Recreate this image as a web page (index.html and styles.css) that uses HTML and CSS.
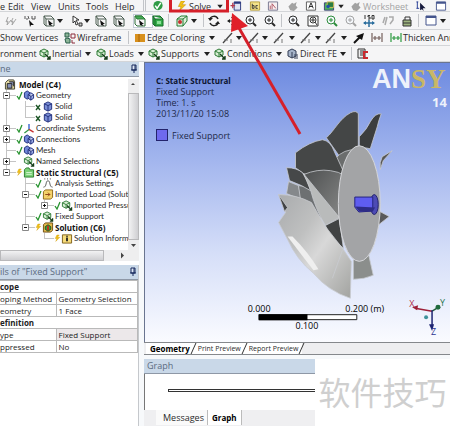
FILE: index.html
```html
<!DOCTYPE html>
<html lang="en">
<head>
    <meta charset="UTF-8">
    <meta name="viewport" content="width=device-width, initial-scale=1.0">
    <title>Mechanical</title>
    <link rel="stylesheet" href="styles.css">
</head>
<body>
    <svg class="defs" aria-hidden="true">
        <symbol id="cube" viewBox="0 0 12 12"><path d="M2 3l4-2 4 2v6l-4 2-4-2z" fill="#7b8fd6" stroke="#1c2a78"/><path d="M2 3l4 2 4-2M6 5v6" fill="none" stroke="#1c2a78"/></symbol>
        <symbol id="cubes" viewBox="0 0 12 12"><path d="M1 3l3-2 3 2v5l-3 2-3-2z" fill="#6f87d8" stroke="#1c2a78"/><path d="M5 5l3-2 3 2v4l-3 2-3-2zM5 5l3 2 3-2M8 7v4" fill="#9aaae4" stroke="#1c2a78"/></symbol>
        <symbol id="gcube" viewBox="0 0 12 12"><path d="M1 3l4-2 4 2v4l-4 2-4-2z" fill="#d8efd4" stroke="#2c7a34"/><path d="M1 3l4 2 4-2M5 5v4" fill="none" stroke="#2c7a34"/><path d="M6 6l5 5M11 8v3H8" fill="none" stroke="#143c18" stroke-width="1.4"/></symbol>
        <symbol id="axes" viewBox="0 0 12 12"><path d="M6 1v6" stroke="#2653c8" stroke-width="1.4"/><path d="M6 7l-5 4" stroke="#2f9440" stroke-width="1.4"/><path d="M6 7l5 3" stroke="#c63030" stroke-width="1.4"/></symbol>
        <symbol id="model" viewBox="0 0 12 12"><path d="M1 4l3-3h6l1 2v8H1z" fill="#e5dba4" stroke="#3b3b2c"/><path d="M3 5h5v5H3zM5 3h5v5" fill="#8a94b8" stroke="#222"/></symbol>
        <symbol id="folder" viewBox="0 0 12 12"><path d="M1 3l2-2h3l1 2h4v8H1z" fill="#7bd077" stroke="#287c2b"/><path d="M3 6h6M3 8h6" stroke="#d6f5d2"/></symbol>
        <symbol id="import" viewBox="0 0 12 12"><path d="M1 3l2-2h8v8l-2 2H1z" fill="#f4d26a" stroke="#8a6412"/><path d="M3 6h5M6 4l2 2-2 2" fill="none" stroke="#8a3c10"/></symbol>
        <symbol id="solution" viewBox="0 0 12 12"><path d="M1 3l2-2h8v8l-2 2H1z" fill="#e2b84c" stroke="#6b4a10"/><path d="M3 5l3-2 3 2v3l-3 2-3-2z" fill="#3fa23c" stroke="#1c541d"/><path d="M6 4v5" stroke="#c82f20" stroke-width="2"/></symbol>
        <symbol id="info" viewBox="0 0 12 12"><path d="M1 2h10v9H1z" fill="#f7dc7a" stroke="#7b5d18"/><path d="M6 3v1M6 5v4" stroke="#222" stroke-width="2"/></symbol>
        <symbol id="settings" viewBox="0 0 12 12"><path d="M1 10c4 0 2-7 5-7s1 7 5 7" fill="none" stroke="#555"/><path d="M2 1h1M5 1h1M8 1h1" stroke="#222"/></symbol>
        <symbol id="tick" viewBox="0 0 7 9"><path d="M1 5l2 3 3-7" fill="none" stroke="#27932f" stroke-width="1.3"/></symbol>
        <symbol id="cross" viewBox="0 0 7 9"><path d="M1 3l4 5M5 3L1 8" fill="none" stroke="#1d5527" stroke-width="1.4"/></symbol>
        <symbol id="bolt" viewBox="0 0 12 12"><path d="M5 0L2 6h3l-2 5 7-7H6l3-4z" fill="#f3c313" stroke="#c79006" stroke-width=".6"/></symbol>
        <symbol id="plus" viewBox="0 0 7 7"><path d="M.5.5h6v6h-6z" fill="#fff" stroke="#888"/><path d="M2 3.500h3M3.500 2v3" stroke="#111"/></symbol>
        <symbol id="minus" viewBox="0 0 7 7"><path d="M.5.5h6v6h-6z" fill="#fff" stroke="#888"/><path d="M2 3.500h3" stroke="#111"/></symbol>
        <symbol id="caret" viewBox="0 0 9 12"><path d="M1 4h6L4 8z" fill="#222"/></symbol>
        <symbol id="pin" viewBox="0 0 8 10"><path d="M2 1h4v5H2zM1 6h6M4 6v3" fill="#dfe8f6" stroke="#17285c"/><path d="M5 1v5" stroke="#17285c"/></symbol>
        <symbol id="ok" viewBox="0 0 12 12"><circle cx="6" cy="5" r="5" fill="#2f9b45"/><path d="M3 5l2 3 4-6" fill="none" stroke="#fff" stroke-width="1.600"/></symbol>
        <symbol id="pageplus" viewBox="0 0 12 12"><path d="M4 1h7v9H4z" fill="#dfe4f2" stroke="#26357c"/><path d="M4 1h7v2H4z" fill="#26357c"/><path d="M0 5h5M2.500 2v6" stroke="#b5374c" stroke-width="1.400"/></symbol>
        <symbol id="note" viewBox="0 0 12 12"><path d="M1 1h10v9H1z" fill="#f3e38a" stroke="#b59b3a"/><path d="M3 3v5h2V5H3M7 5h2M7 5v3h2" fill="none" stroke="#333"/></symbol>
        <symbol id="chart" viewBox="0 0 12 12"><path d="M1 1h10v9H1z" fill="#f6eef0" stroke="#74748c"/><path d="M3 9V5M5 9V3l4 5" fill="none" stroke="#b05360"/></symbol>
        <symbol id="blob" viewBox="0 0 12 12"><path d="M1 6l4-4 2 1 3-2-1 4 2 2-4 4-4-1z" fill="#a2a2a2"/></symbol>
        <symbol id="boxa" viewBox="0 0 12 12"><path d="M1 1h10v9H1z" fill="#fff" stroke="#555"/><path d="M3.500 8L6 2l2.500 6M4 6h4" fill="none" stroke="#222"/></symbol>
        <symbol id="photo" viewBox="0 0 12 12"><path d="M1 2h10v8H1z" fill="#4ab05c" stroke="#3a3d75"/><path d="M4 1h7v6H4z" fill="#2b7d42" stroke="#d9c15a"/><circle cx="5" cy="6" r="2" fill="#214fae"/></symbol>
        <symbol id="icursor" viewBox="0 0 12 12"><path d="M2 1v7M1 1h2M1 8h3" stroke="#1d3592"/><path d="M5 2l6 6H8l1 3-2-2-2 1z" fill="#161a3c"/></symbol>
        <symbol id="greybolt" viewBox="0 0 12 12"><path d="M3 2L1 7l2-1-1 4 4-5M8 3L6 7l2-1-1 4 4-6" fill="none" stroke="#a5a5a5"/></symbol>
        <symbol id="dots" viewBox="0 0 12 12"><path d="M1 1v3M4 1l1 3M8 1v3M11 1v3M2 4h2M8 4h3" stroke="#555"/><path d="M5 5l5 5H7l-1 2z" fill="#111"/></symbol>
        <symbol id="selbox" viewBox="0 0 12 12"><path d="M1 1h7l3 3v7H3L1 9zM1 1l2 3h8M3 4v7" fill="#f7f7f7" stroke="#4a5c50"/><path d="M5 5l5 4H8l1 2-3-1z" fill="#111"/></symbol>
        <symbol id="selgreen" viewBox="0 0 12 12"><path d="M1 1h7l3 3v7H3L1 9z" fill="#f7f7f7" stroke="#2a6d36"/><path d="M1 1h7l3 3H3z" fill="#45ab55" stroke="#2a7c36"/><path d="M5 5l5 4H8l1 2-3-1z" fill="#111"/></symbol>
        <symbol id="fullgreen" viewBox="0 0 12 12"><path d="M1 1h7l3 3v7H3L1 9zM1 1l2 3h8M3 4v7" fill="#35ae4b" stroke="#146b26"/><path d="M5 6h4v3H5z" fill="#8be097"/></symbol>
        <symbol id="pick" viewBox="0 0 12 12"><path d="M2 1v7l2-2 1 4 2-1-2-4h3z" fill="#fff" stroke="#333"/><path d="M8 8h3v3H8z" fill="#ccc" stroke="#333"/></symbol>
        <symbol id="view" viewBox="0 0 12 12"><path d="M1 4l4-3h6v5l-4 5H1z" fill="#dff0dc" stroke="#247c33"/><path d="M1 4h6v7M7 4l4-3" fill="none" stroke="#247c33"/><circle cx="4" cy="7" r="2" fill="#c83030"/></symbol>
        <symbol id="rotate" viewBox="0 0 12 12"><path d="M10 4C8 0 3 1 2 4M2 8c2 4 7 3 8 0" fill="none" stroke="#222" stroke-width="1.500"/><path d="M0 3h5L2 6zM12 9H7l3-3z" fill="#222"/></symbol>
        <symbol id="move" viewBox="0 0 12 12"><path d="M6 1v10M1 6h10" stroke="#222"/><path d="M6 0l2 3H4zM6 12l2-3H4zM0 6l3-2v4zM12 6L9 4v4z" fill="#222"/></symbol>
        <symbol id="lens" viewBox="0 0 12 12"><circle cx="5" cy="5" r="4" fill="#f4f7fb" stroke="currentColor"/><path d="M8 8l3 3" stroke="currentColor" stroke-width="2"/><path d="M3 5h4M5 3v4" stroke="currentColor"/></symbol>
        <symbol id="boxlens" viewBox="0 0 12 12"><path d="M1 1h10v10H1z" fill="#fff" stroke="#333"/><circle cx="6" cy="5" r="3" fill="none" stroke="#333"/><path d="M8 7l2 3M4 5h4M6 3v4" stroke="#333"/></symbol>
        <symbol id="iso" viewBox="0 0 12 12"><path d="M2 0v4M7 .5H5v1.500h2V4H5M9 .5h2V4H9z" fill="none" stroke="#333"/><path d="M1 8h10M6 5v7" stroke="#2b6d9d" stroke-width="1.500"/><path d="M0 8l3-2v4zM12 8L9 6v4z" fill="#2b6d9d"/></symbol>
        <symbol id="look" viewBox="0 0 12 12"><path d="M3 2L1 8M5 2L3 10M7 2h4v3L8 9" fill="none" stroke="#aaa" stroke-width="1.500"/></symbol>
        <symbol id="stack" viewBox="0 0 12 12"><path d="M2 5h8v6H2z" fill="#9db47f" stroke="#333"/><path d="M4 5V2h5v3M2 8h8" fill="none" stroke="#333"/></symbol>
        <symbol id="window" viewBox="0 0 12 12"><path d="M1 1h10v9H1z" fill="#fff" stroke="#44548c"/><path d="M1 2h10" stroke="#44548c" stroke-width="2"/></symbol>
        <symbol id="wire" viewBox="0 0 12 12"><path d="M1 1h4v4H1zM1 7l2-1 3 1v4H2z" fill="#8db698" stroke="#2a5f4a"/><path d="M7 2h4v4H7zM8 8v3h3" fill="none" stroke="#8c2d3a"/></symbol>
        <symbol id="swatch" viewBox="0 0 12 12"><path d="M1 2h10v8H1z" fill="#d8901c"/><path d="M5 2v8" stroke="#a86508"/></symbol>
        <symbol id="edge" viewBox="0 0 12 12"><path d="M1 11l9-10" stroke="#444" stroke-width="1.300"/><path d="M2 8h4M9 7v4" stroke="#777"/></symbol>
        <symbol id="arrow" viewBox="0 0 12 12"><path d="M1 11l6-6" stroke="#111" stroke-width="2"/><path d="M11 1L9 8 3 4z" fill="#111"/></symbol>
        <symbol id="span" viewBox="0 0 12 12"><path d="M1 1v9M11 1v9M2 6h8M4 4v4M8 4v4" fill="none" stroke="currentColor" stroke-width="1.200"/></symbol>
        <symbol id="report" viewBox="0 0 12 12"><path d="M1 1h7v9H1zM3 3h4M3 5h4M3 7h4" fill="#eee" stroke="#333"/><path d="M11 4H7v6h4" fill="none" stroke="#c9282d" stroke-width="2"/></symbol>
        <symbol id="direct" viewBox="0 0 12 12"><path d="M1 3l4-2 4 2v5l-4 2-4-2z" fill="#a5b3c9" stroke="#333c55"/><path d="M5 4v6M8 6v5M10 6v5" stroke="#333c55"/></symbol>
    </svg>

    <header class="toolbars">
        <nav class="bar bar-menu">
            <button>e</button>
            <button>Edit</button>
            <button>View</button>
            <button>Units</button>
            <button>Tools</button>
            <button>Help</button>
            <i class="sep double"></i>
            <button aria-label="Check"><svg><use href="#ok"/></svg></button>
            <button><svg><use href="#bolt"/></svg>Solve</button>
            <button class="drop" aria-label="Solve options"><svg><use href="#caret"/></svg></button>
            <button aria-label="New section"><svg><use href="#pageplus"/></svg></button>
            <button aria-label="Comment"><svg><use href="#note"/></svg></button>
            <button aria-label="Chart"><svg><use href="#chart"/></svg></button>
            <button aria-label="Tag"><svg><use href="#blob"/></svg></button>
            <button aria-label="Annotation"><svg><use href="#boxa"/></svg></button>
            <button aria-label="Image"><svg><use href="#photo"/></svg></button>
            <button class="drop" aria-label="Image options"><svg><use href="#caret"/></svg></button>
            <button class="off"><svg><use href="#blob"/></svg>Worksheet</button>
            <button aria-label="Selection info"><svg><use href="#icursor"/></svg></button>
            <button aria-label="Legend"><svg><use href="#window"/></svg></button>
        </nav>
        <div class="bar bar-select">
            <button aria-label="Label"><svg><use href="#greybolt"/></svg></button>
            <button aria-label="Coordinates"><svg><use href="#dots"/></svg></button>
            <button aria-label="Select type"><svg><use href="#selbox"/></svg></button>
            <button class="drop" aria-label="Type options"><svg><use href="#caret"/></svg></button>
            <button aria-label="Select mode"><svg><use href="#pick"/></svg></button>
            <button class="drop" aria-label="Mode options"><svg><use href="#caret"/></svg></button>
            <button aria-label="Vertex"><svg><use href="#selbox"/></svg></button>
            <button aria-label="Edge"><svg><use href="#selbox"/></svg></button>
            <button class="pressed" aria-label="Face"><svg><use href="#selgreen"/></svg></button>
            <button aria-label="Body"><svg><use href="#fullgreen"/></svg></button>
            <i class="sep"></i>
            <button aria-label="Extend"><svg><use href="#view"/></svg></button>
            <button class="drop" aria-label="Extend options"><svg><use href="#caret"/></svg></button>
            <i class="sep"></i>
            <button aria-label="Rotate"><svg><use href="#rotate"/></svg></button>
            <button aria-label="Pan"><svg><use href="#move"/></svg></button>
            <button aria-label="Zoom"><svg><use href="#lens"/></svg></button>
            <button aria-label="Box zoom"><svg><use href="#lens"/></svg></button>
            <i class="sep"></i>
            <button aria-label="Fit"><svg><use href="#lens"/></svg></button>
            <button aria-label="Magnifier"><svg><use href="#boxlens"/></svg></button>
            <button class="green" aria-label="Previous view"><svg><use href="#lens"/></svg></button>
            <button class="off" aria-label="Next view"><svg><use href="#lens"/></svg></button>
            <button aria-label="Iso view"><svg><use href="#iso"/></svg></button>
            <button aria-label="Look at"><svg><use href="#look"/></svg></button>
            <button aria-label="Manage views"><svg><use href="#stack"/></svg></button>
            <i class="sep"></i>
            <button aria-label="Viewports"><svg><use href="#window"/></svg></button>
            <button class="drop" aria-label="Viewport options"><svg><use href="#caret"/></svg></button>
        </div>
        <div class="bar bar-edges">
            <button>Show Vertices</button>
            <button><svg><use href="#wire"/></svg>Wireframe</button>
            <i class="sep"></i>
            <button><svg><use href="#swatch"/></svg>Edge Coloring</button>
            <button class="drop" aria-label="Coloring options"><svg><use href="#caret"/></svg></button>
            <button aria-label="Free edges"><svg><use href="#edge"/></svg></button>
            <button class="drop" aria-label="Free options"><svg><use href="#caret"/></svg></button>
            <button aria-label="Single edges"><svg><use href="#edge"/></svg></button>
            <button class="drop" aria-label="Single options"><svg><use href="#caret"/></svg></button>
            <button aria-label="Double edges"><svg><use href="#edge"/></svg></button>
            <button class="drop" aria-label="Double options"><svg><use href="#caret"/></svg></button>
            <button aria-label="Triple edges"><svg><use href="#edge"/></svg></button>
            <button class="drop" aria-label="Triple options"><svg><use href="#caret"/></svg></button>
            <button aria-label="Multiple edges"><svg><use href="#edge"/></svg></button>
            <button class="drop" aria-label="Multiple options"><svg><use href="#caret"/></svg></button>
            <button aria-label="Edge direction"><svg><use href="#arrow"/></svg></button>
            <button class="brown" aria-label="Mesh connection"><svg><use href="#span"/></svg></button>
            <button class="thicken"><svg><use href="#span"/></svg><span>Thicken Ann</span></button>
        </div>
        <div class="bar bar-env">
            <button>ronment</button>
            <button><svg><use href="#gcube"/></svg>Inertial</button>
            <button class="drop" aria-label="Inertial options"><svg><use href="#caret"/></svg></button>
            <button><svg><use href="#gcube"/></svg>Loads</button>
            <button class="drop" aria-label="Load options"><svg><use href="#caret"/></svg></button>
            <button><svg><use href="#gcube"/></svg>Supports</button>
            <button class="drop" aria-label="Support options"><svg><use href="#caret"/></svg></button>
            <button><svg><use href="#gcube"/></svg>Conditions</button>
            <button class="drop" aria-label="Condition options"><svg><use href="#caret"/></svg></button>
            <button><svg><use href="#direct"/></svg>Direct FE</button>
            <button class="drop" aria-label="Direct FE options"><svg><use href="#caret"/></svg></button>
            <i class="sep"></i>
            <button aria-label="Commands"><svg><use href="#report"/></svg></button>
        </div>
    </header>

    <main class="workspace">
        <aside class="side">
            <section class="outline">
                <h2 class="panel-title">ne <svg class="pin"><use href="#pin"/></svg></h2>
                <div class="tree-box">
                    <div class="tree">
                        <div class="row root"><svg class="icon"><use href="#model"/></svg><b>Model (C4)</b></div>
                        <ul>
                            <li>
                                <div class="row"><button class="slot" aria-label="Collapse"><svg><use href="#minus"/></svg></button><svg class="state"><use href="#tick"/></svg><svg class="icon"><use href="#cubes"/></svg>Geometry</div>
                                <ul>
                                    <li><div class="row"><i class="slot"></i><svg class="state"><use href="#cross"/></svg><svg class="icon"><use href="#cube"/></svg>Solid</div></li>
                                    <li><div class="row"><i class="slot"></i><svg class="state"><use href="#cross"/></svg><svg class="icon"><use href="#cube"/></svg>Solid</div></li>
                                </ul>
                            </li>
                            <li><div class="row"><button class="slot" aria-label="Expand"><svg><use href="#plus"/></svg></button><svg class="state"><use href="#tick"/></svg><svg class="icon"><use href="#axes"/></svg>Coordinate Systems</div></li>
                            <li><div class="row"><button class="slot" aria-label="Expand"><svg><use href="#plus"/></svg></button><svg class="state"><use href="#tick"/></svg><svg class="icon"><use href="#cubes"/></svg>Connections</div></li>
                            <li><div class="row"><i class="slot"></i><svg class="state"><use href="#tick"/></svg><svg class="icon"><use href="#cubes"/></svg>Mesh</div></li>
                            <li><div class="row"><button class="slot" aria-label="Expand"><svg><use href="#plus"/></svg></button><i class="state"></i><svg class="icon"><use href="#gcube"/></svg>Named Selections</div></li>
                            <li>
                                <div class="row"><button class="slot" aria-label="Collapse"><svg><use href="#minus"/></svg></button><svg class="state"><use href="#bolt"/></svg><svg class="icon"><use href="#folder"/></svg><b>Static Structural (C5)</b></div>
                                <ul>
                                    <li><div class="row"><i class="slot"></i><svg class="state"><use href="#tick"/></svg><svg class="icon"><use href="#settings"/></svg>Analysis Settings</div></li>
                                    <li>
                                        <div class="row"><button class="slot" aria-label="Collapse"><svg><use href="#minus"/></svg></button><svg class="state"><use href="#tick"/></svg><svg class="icon"><use href="#import"/></svg>Imported Load (Soluti</div>
                                        <ul>
                                            <li><div class="row"><button class="slot" aria-label="Expand"><svg><use href="#plus"/></svg></button><svg class="state"><use href="#tick"/></svg><svg class="icon"><use href="#gcube"/></svg>Imported Pressu</div></li>
                                        </ul>
                                    </li>
                                    <li><div class="row"><i class="slot"></i><svg class="state"><use href="#tick"/></svg><svg class="icon"><use href="#gcube"/></svg>Fixed Support</div></li>
                                    <li>
                                        <div class="row"><button class="slot" aria-label="Collapse"><svg><use href="#minus"/></svg></button><svg class="state"><use href="#bolt"/></svg><svg class="icon"><use href="#solution"/></svg><b>Solution (C6)</b></div>
                                        <ul>
                                            <li><div class="row"><i class="slot"></i><svg class="state"><use href="#bolt"/></svg><svg class="icon"><use href="#info"/></svg>Solution Informa</div></li>
                                        </ul>
                                    </li>
                                </ul>
                            </li>
                        </ul>
                    </div>
                    <div class="vscroll">
                        <svg viewBox="0 0 11 10"><path d="M3 6l2-2 2 2z" fill="#444"/></svg>
                        <span class="thumb"></span>
                        <svg viewBox="0 0 11 10"><path d="M3 4h5L5.500 7z" fill="#444"/></svg>
                    </div>
                </div>
                <div class="hscroll">
                    <span class="thumb"></span>
                    <svg viewBox="0 0 10 10"><path d="M4 2l3 3-3 3z" fill="#444"/></svg>
                </div>
            </section>

            <section class="details">
                <h2 class="panel-title">ils of "Fixed Support" <svg class="pin"><use href="#pin"/></svg></h2>
                <table>
                    <colgroup><col class="name"><col></colgroup>
                    <tr><th colspan="2">cope</th></tr>
                    <tr><td>oping Method</td><td>Geometry Selection</td></tr>
                    <tr><td>eometry</td><td>1 Face</td></tr>
                    <tr><th colspan="2">efinition</th></tr>
                    <tr><td>ype</td><td class="locked">Fixed Support</td></tr>
                    <tr><td>ppressed</td><td>No</td></tr>
                </table>
            </section>
        </aside>

        <div class="content">
            <section class="viewer">
                <svg class="scene" viewBox="144 62 306 280" preserveAspectRatio="xMinYMin slice">
                    <defs>
                        <linearGradient id="pale" x1="0" y1="0" x2="1" y2="1">
                            <stop offset="0" stop-color="#a9abad"/>
                            <stop offset=".35" stop-color="#bfc0c0"/>
                            <stop offset=".55" stop-color="#d8d8d8"/>
                            <stop offset="1" stop-color="#a2a3a0"/>
                        </linearGradient>
                        <linearGradient id="mid" x1="0" y1="0" x2="1" y2="1">
                            <stop offset="0" stop-color="#4d4f50"/>
                            <stop offset="1" stop-color="#8b8c8b"/>
                        </linearGradient>
                    </defs>
                    <g stroke="#c9cbd0" stroke-width=".8" stroke-linejoin="round">
                        <!-- upper blades -->
                        <path d="M326 137C334 130 339 118 350 112q6-3 8 1v36l-15 12z" fill="#444646"/>
                        <path d="M359 136q8-8 11-15 5-9 11-8-3 8-4 13l-7 22-11-2z" fill="#3c3e3f"/>
                        <path d="M335 158q8-10 22-9l-8 22-4 5z" fill="#6b6d6d"/>
                        <path d="M380 162l2-6 10-6-9 10-3 9z" fill="#555"/>
                        <path d="M295 152q14-11 27-13 8 1 12 12l11 24v12l-42-14-8-6z" fill="#454747"/>
                        <!-- middle blades -->
                        <path d="M303 174q14-6 27-4 9 1 14 5l-4 45-16 2z" fill="url(#mid)"/>
                        <path d="M288 181l10 4 3 14-15-6z" fill="#85888b"/>
                        <path d="M298 185l14 2 10 32-22-20z" fill="#6d7072"/>
                        <path d="M286 167q10 0 16 5 5 6 8 18l-9-5-12-5z" fill="#464849"/>
                        <path d="M303 173l36 44-14 8q-10-16-15-36z" fill="#b9bbbb"/>
                        <path d="M325 225l14-7 4 30-14-14z" fill="#414343"/>
                        <path d="M376 209l13 7-14 11z" fill="#59595b"/>
                        <path d="M353 260l14-12 6 27q-9 4-20 4z" fill="#8b8e8c"/>
                        <!-- lower shell -->
                        <path d="M278 194q18 0 33 8l14 24 18 23 8 12-1 37q-22-7-37-25-17-14-26-34l-9-17 7-10z" fill="url(#pale)"/>
                        <path d="M278 194l9 13-3 4z" fill="#404244"/>
                        <path d="M287 236q13 17 26 34l5-1q-10-17-26-33z" fill="#efefef" stroke="none"/>
                        <path d="M342 250l-10 28" fill="none"/>
                    </g>
                    <ellipse cx="359" cy="203" rx="21" ry="58" fill="#a3a4a6" stroke="#d4d5d8"/>
                    <ellipse cx="374" cy="204" rx="4" ry="10" fill="#4d4bb5" stroke="#25246e"/>
                    <path d="M354.500 196.500h18v14l-14 1-4-5z" fill="#5f5df0" stroke="#26247e"/>
                    <path d="M355 206l4 5h13l3-4z" fill="#2e2c86"/>
                    <!-- scale -->
                    <path d="M258.500 314.500h98v5h-98z" fill="#fff" stroke="#222"/>
                    <path d="M258 314h49v6h-49z" fill="#000"/>
                    <g class="scale">
                        <text x="247" y="312">0.000</text>
                        <text x="345" y="312">0.200 (m)</text>
                        <text x="295" y="329">0.100</text>
                    </g>
                    <!-- triad -->
                    <path d="M432 311l-17-3" stroke="#9d2038" stroke-width="1.500"/>
                    <path d="M412 307l6-2-1 5z" fill="#9d2038"/>
                    <path d="M432 311l5-3" stroke="#245c3c" stroke-width="1.500"/>
                    <circle cx="438" cy="307" r="2.500" fill="#1f6a3c"/>
                    <path d="M432 310v15" stroke="#1e2572" stroke-width="1.500"/>
                    <path d="M429 324h5l-2 7z" fill="#1e2572"/>
                    <circle cx="426" cy="317" r="2" fill="#3f929b"/>
                    <g class="scale">
                        <text x="409" y="307" fill="#b0304c">X</text>
                        <text x="440" y="306" fill="#2c7550">Y</text>
                        <text x="431" y="335" fill="#2c3690">Z</text>
                    </g>
                </svg>
                <div class="caption">
                    <b>C: Static Structural</b>
                    <span>Fixed Support</span>
                    <span>Time: 1. s</span>
                    <span>2013/11/20 15:08</span>
                    <span class="key"><i></i>Fixed Support</span>
                </div>
                <div class="brand">
                    <div class="logo">AN<em>SY</em></div>
                    <div class="release">14</div>
                </div>
            </section>
            <nav class="view-tabs">
                <button class="active">Geometry</button>
                <button>Print Preview</button>
                <button>Report Preview</button>
            </nav>
            <section class="graph">
                <h2 class="panel-title">Graph</h2>
                <div class="timeline"><span></span></div>
                <nav class="graph-tabs">
                    <button>Messages</button>
                    <button class="active">Graph</button>
                </nav>
                <div class="watermark" lang="zh">软件技巧</div>
            </section>
        </div>
    </main>

    <svg class="marker" width="310" height="140" aria-hidden="true">
        <path d="M170.500-3h57v14h-57z" fill="none" stroke="#d5202a" stroke-width="3"/>
        <path d="M239 28l61 106" stroke="#d5202a" stroke-width="3"/>
        <path d="M232 13l16 13-17 6z" fill="#e0202a"/>
    </svg>
</body>
</html>
```
FILE: styles.css
```css
* {
    box-sizing: border-box;
}

body {
    margin: 0;
    min-height: 100vh;
    display: flex;
    flex-direction: column;
    overflow: hidden;
    background: #f3f4f6;
    color: #2b2b2b;
    font-family: "Open Sans", "Noto Sans", sans-serif;
    font-size: 9px;
    line-height: 12px;
}

button {
    display: flex;
    align-items: center;
    padding: 0;
    border: 0;
    background: none;
    color: inherit;
    font: inherit;
    white-space: nowrap;
}

h2, ul {
    margin: 0;
    padding: 0;
    list-style: none;
}

.defs {
    position: absolute;
    width: 0;
    height: 0;
}

/* toolbars */
.bar {
    display: grid;
    align-items: center;
    height: 16px;
    border-bottom: 1px solid #d3d5d8;
    background: #f5f5f6;
    overflow: hidden;
}

.bar svg {
    flex: none;
    width: 12px;
    height: 12px;
    margin-right: 1px;
}

.bar .drop svg {
    width: 9px;
}

.bar-menu {
    height: 12px;
    line-height: 10px;
    grid-template-columns: 8px 23px 27px 28px 29px 28px 9px 24px 40px 14px 19px 18px 20px 18px 18px 14px 13px 65px 20px 15px;
}

.bar-menu svg {
    height: 11px;
}

.bar-select {
    height: 18px;
    padding-left: 5px;
    grid-template-columns: 19px 19px 13px 15px 12px 12px 18px 21px 18px 16px 8px 14px 13px 5px 19px 18px 19px 17px 7px 19px 19px 19px 18px 19px 19px 17px 7px 14px 11px;
}

.bar-edges {
    grid-template-columns: 64px 64px 6px 74px 14px 13px 13px 13px 12px 15px 12px 14px 11px 15px 13px 18px 19px 1fr;
}

.bar-env {
    grid-template-columns: 39px 45px 12px 41px 11px 55px 11px 61px 12px 52px 12px 6px 12px;
}

.sep {
    width: 1px;
    height: 13px;
    background: #c2c4c8;
}

.double {
    width: 3px;
    border: solid #c2c4c8;
    border-width: 0 1px;
    background: none;
}

.pressed {
    outline: 1px solid #c4cbd6;
    background: #fff;
}

.off {
    color: #a3a3a3;
}

.green {
    color: #2c8c3b;
}

.brown {
    color: #75605c;
}

.thicken svg {
    color: #2c9a40;
}

/* panels */
.workspace {
    flex: 1;
    display: flex;
    gap: 5px;
    background: #f7f9fb;
}

.side {
    width: 139px;
    flex: none;
    display: flex;
    flex-direction: column;
    background: #fff;
}

.panel-title {
    display: flex;
    align-items: center;
    justify-content: space-between;
    height: 15px;
    border-bottom: 1px solid #8e98a6;
    background: #c9d8e8;
    color: #5b6b80;
    font-size: 9px;
    font-weight: normal;
}

.pin {
    width: 8px;
    height: 10px;
    margin-right: 1px;
}

.tree-box {
    display: flex;
    height: 173px;
    padding-top: 2px;
}

.tree {
    flex: 1;
    min-width: 0;
    overflow: hidden;
    font-family: Lato, "Liberation Sans", sans-serif;
    font-size: 8px;
    line-height: 11px;
}

.tree b {
    font-family: "Open Sans", sans-serif;
    color: #111;
}

.tree > ul {
    padding-left: 3px;
}

.tree ul ul {
    padding-left: 19px;
}

.tree li {
    background: linear-gradient(#c4c4c4, #c4c4c4) 3px 0 / 1px 100% no-repeat;
}

.tree li:last-child {
    background-size: 1px 6px;
}

.row {
    display: flex;
    align-items: center;
    height: 11px;
    white-space: nowrap;
}

.root {
    padding-left: 4px;
    gap: 2px;
}

.slot {
    flex: none;
    width: 13px;
    height: 11px;
    background: linear-gradient(#c4c4c4, #c4c4c4) 3px 5px / 10px 1px no-repeat;
}

.slot svg {
    width: 7px;
    height: 7px;
}

.state {
    flex: none;
    width: 7px;
    height: 9px;
}

.icon {
    flex: none;
    width: 12px;
    height: 11px;
    margin-right: 1px;
}

.vscroll {
    display: flex;
    flex-direction: column;
    width: 11px;
    background: #eeeeef;
}

.vscroll svg {
    height: 10px;
}

.thumb {
    border: 1px solid #b9b9bb;
    background: #dcdcde;
}

.vscroll .thumb {
    flex: 1;
    margin-top: 4px;
    background: linear-gradient(90deg, #f2f2f3, #cfcfd2);
}

.hscroll {
    display: flex;
    justify-content: space-between;
    height: 11px;
    padding-right: 12px;
    background: #eeeeef;
}

.hscroll .thumb {
    width: 104px;
    background: linear-gradient(#f2f2f3, #cfcfd2);
}

.hscroll svg {
    width: 10px;
}

.details {
    flex: 1;
    margin-top: 4px;
    border-right: 1px solid #c5c8cc;
}

.details table {
    width: 100%;
    table-layout: fixed;
    border-collapse: collapse;
    font-size: 8px;
    line-height: 11px;
    color: #222;
}

.details th,
.details td {
    height: 12px;
    padding: 0 2px;
    border: 1px solid #b9b9b9;
    border-left: 0;
    text-align: left;
    white-space: nowrap;
}

.details .name {
    width: 56px;
}

.details th,
.details td:first-child {
    padding-left: 0;
}

.details .locked {
    background: #ece8ea;
}

/* graphics window */
.content {
    flex: 1;
    min-width: 0;
    display: flex;
    flex-direction: column;
}

.viewer {
    position: relative;
    display: flex;
    justify-content: space-between;
    height: 280px;
    border: solid #6a7590;
    border-width: 1px 0 0 1px;
    background: linear-gradient(#6d8ae0, #a3b6ee 35%, #d5def8 68%, #fafbff);
    overflow: hidden;
}

.scene {
    position: absolute;
    inset: 0;
    width: 100%;
    height: 100%;
}

.scale {
    font-size: 9px;
}

.caption {
    position: relative;
    display: flex;
    flex-direction: column;
    padding: 12px 0 0 11px;
    line-height: 11px;
    color: #1e2a4a;
}

.caption b {
    font-size: 8px;
    color: #0d1430;
}

.key {
    display: flex;
    align-items: center;
    gap: 4px;
    margin-top: 10px;
}

.key i {
    width: 12px;
    height: 12px;
    border: 1px solid #23236c;
    background: #6e69ee;
}

.brand {
    position: relative;
    width: 78px;
    color: #eef2fb;
    white-space: nowrap;
}

.logo {
    font: bold 27px/32px "Liberation Sans", sans-serif;
}

.logo em {
    color: #c9b766;
    font-family: "Liberation Serif", serif;
    font-style: normal;
}

.release {
    padding-left: 60px;
    font-size: 13px;
    font-weight: bold;
    line-height: 14px;
}

.view-tabs {
    display: flex;
    height: 13px;
    margin-bottom: 4px;
    padding-left: 2px;
    border: solid #85888c;
    border-width: 1px 0;
    background: #eeeef0;
    font-size: 7px;
}

/* slanted divider between two tabs */
.view-tabs button {
    padding-left: 4px;
    background: #fff;
}

.view-tabs button::after {
    content: "";
    width: 1px;
    height: 11px;
    margin-left: 3px;
    background: #333;
    transform: skewX(-24deg);
}

.view-tabs .active {
    font-size: 8px;
    font-weight: bold;
    color: #000;
}

.graph {
    position: relative;
    flex: 1;
    display: flex;
    flex-direction: column;
}

.graph .panel-title {
    padding-left: 3px;
}

.timeline {
    flex: 1;
    display: flex;
    align-items: center;
    min-height: 36px;
    padding: 0 0 4px 23px;
    border-left: 1px solid #777;
    background: #fff;
}

.timeline span {
    flex: 1;
    height: 3px;
    border: 1px solid #333;
}

.graph-tabs {
    display: flex;
    height: 16px;
    padding: 0 0 1px 12px;
    background: #efeff1;
}

.graph-tabs button {
    padding: 0 3px 0 7px;
    border-right: 1px solid #bbb;
    background: #fafafa;
}

.graph-tabs .active {
    padding: 0 4px;
    background: #fff;
    font-size: 8px;
    font-weight: bold;
    color: #000;
}

/* notes laid over the window */
.watermark {
    position: absolute;
    top: 0;
    right: 0;
    bottom: 0;
    width: 135px;
    display: flex;
    align-items: center;
    justify-content: center;
    padding-bottom: 4px;
    background: #fff;
    color: #cfcfcf;
    font: 32px/40px "Noto Sans CJK SC", sans-serif;
}

.marker {
    position: absolute;
    top: 0;
    left: 0;
    pointer-events: none;
}
```
